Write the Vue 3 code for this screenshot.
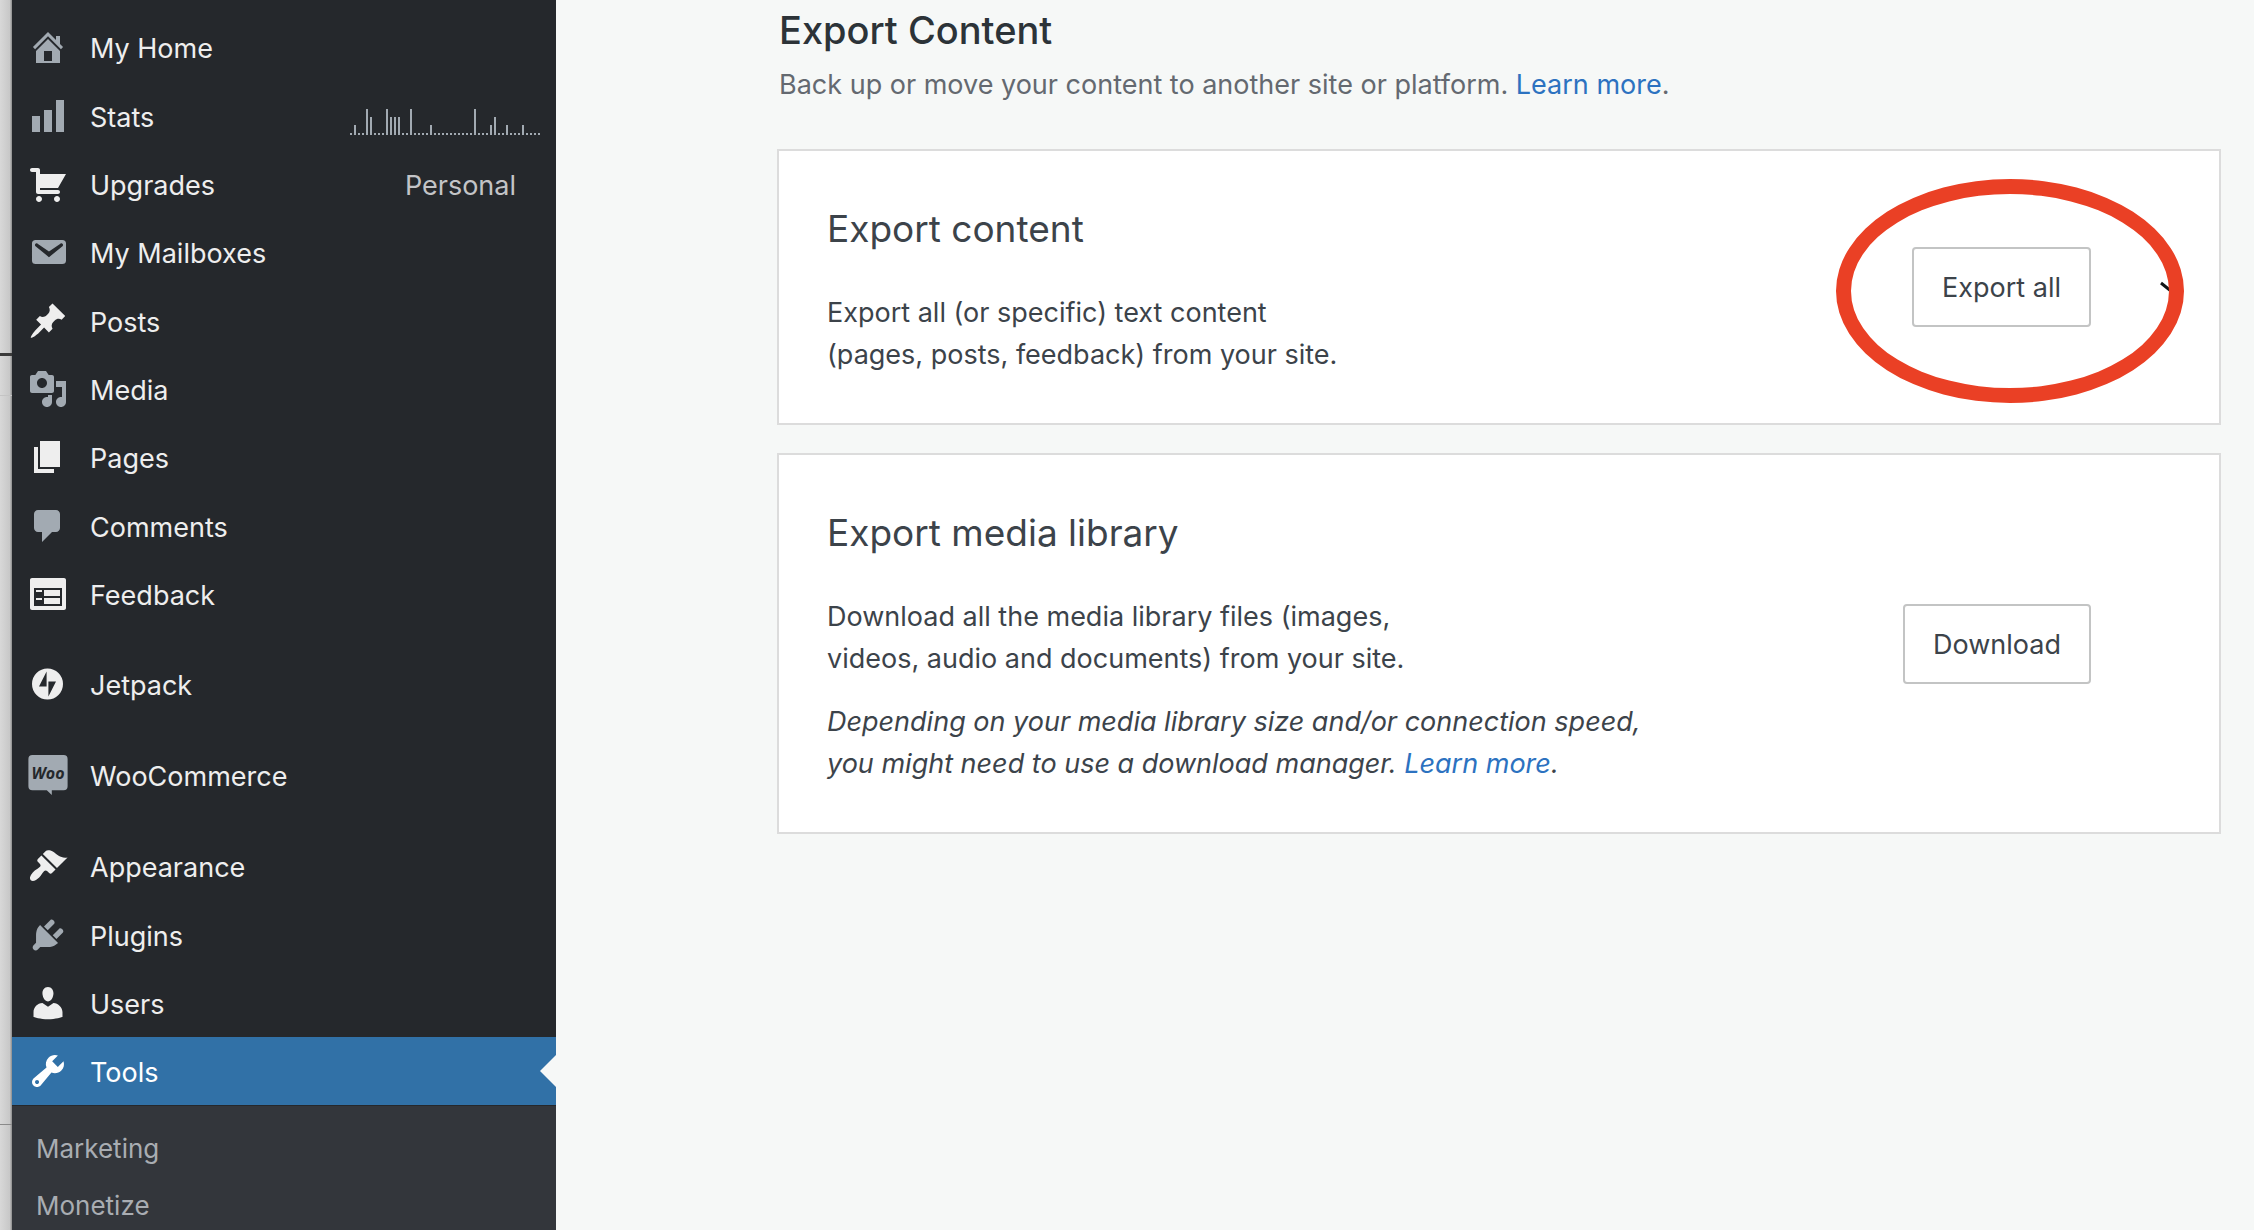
<script setup>
const groups = [
  [
    { label: 'My Home', dim: true, d: 'M16 8.5l1.53 1.53-1.06 1.06L10 4.6l-6.47 6.49-1.06-1.06L10 2.5l4 4v-2h2v4zm-6-2.46l6 5.99V18H4v-5.97zM12 17v-5H8v5h4z' },
    { label: 'Stats', dim: true, spark: true, d: 'M18 18V2h-4v16h4zm-6 0V7H8v11h4zm-6 0v-8H2v8h4z' },
    { label: 'Upgrades', note: 'Personal', d: 'M6 13h9c.55 0 1 .45 1 1s-.45 1-1 1H5c-.55 0-1-.45-1-1V4H2c-.55 0-1-.45-1-1s.45-1 1-1h3c.55 0 1 .45 1 1v2h13l-4 7H6v1zm-.5 3c.83 0 1.5.67 1.5 1.5S6.33 19 5.5 19 4 18.33 4 17.5 4.67 16 5.5 16zm9 0c.83 0 1.5.67 1.5 1.5s-.67 1.5-1.5 1.5-1.5-.67-1.5-1.5.67-1.5 1.5-1.5z' },
    { label: 'My Mailboxes', dim: true, d: 'M3.87 4h13.25C18.37 4 19 4.59 19 5.79v8.42c0 1.19-.63 1.79-1.88 1.79H3.87c-1.25 0-1.88-.6-1.88-1.79V5.79c0-1.2.63-1.79 1.88-1.79zm6.62 8.6l6.74-5.53c.24-.2.43-.66.13-1.07-.29-.41-.82-.42-1.17-.17l-5.7 3.86L4.8 5.83c-.35-.25-.88-.24-1.17.17-.3.41-.11.87.13 1.07z' },
    { label: 'Posts', d: 'M10.44 3.02l1.82-1.82 6.36 6.35-1.83 1.82c-1.05-.68-2.48-.57-3.41.36l-.75.75c-.92.93-1.04 2.35-.35 3.41l-1.83 1.82-2.41-2.41-2.8 2.79c-.42.42-3.38 2.71-3.8 2.29s1.86-3.39 2.28-3.81l2.79-2.79L4.1 9.36l1.83-1.82c1.05.69 2.48.57 3.4-.36l.75-.75c.93-.92 1.05-2.35.36-3.41z' },
    { label: 'Media', dim: true, d: 'M13 11V4c0-.55-.45-1-1-1h-1.67L9 1H5L3.67 3H2c-.55 0-1 .45-1 1v7c0 .55.45 1 1 1h10c.55 0 1-.45 1-1zM7 4.5c1.38 0 2.5 1.12 2.5 2.5S8.38 9.5 7 9.5 4.5 8.38 4.5 7 5.62 4.5 7 4.5zM14 6h5v10.5c0 1.38-1.12 2.5-2.5 2.5S14 17.88 14 16.5s1.12-2.5 2.5-2.5c.17 0 .34.02.5.05V9h-3V6zm-4 8.05V13h2v3.5c0 1.38-1.12 2.5-2.5 2.5S7 17.88 7 16.5 8.12 14 9.5 14c.17 0 .34.02.5.05z' },
    { label: 'Pages', d: 'M6 15V2h10v13H6zm-1 1h8v2H3V5h2v11z' },
    { label: 'Comments', dim: true, d: 'M5 2h9c1.1 0 2 .9 2 2v7c0 1.1-.9 2-2 2h-2l-5 5v-5H5c-1.1 0-2-.9-2-2V4c0-1.1.9-2 2-2z' },
    { label: 'Feedback', d: 'M2 2h16c.55 0 1 .45 1 1v14c0 .55-.45 1-1 1H2c-.55 0-1-.45-1-1V3c0-.55.45-1 1-1zm15 14V7H3v9h14zM4 8v1h3V8H4zm4 0v3h8V8H8zm-4 4v1h3v-1H4zm4 0v3h8v-3H8z' },
  ],
  [{ label: 'Jetpack', d: 'M9.75 2.25a7.75 7.75 0 1 0 0 15.5a7.75 7.75 0 1 0 0-15.5zM9.3 11.2H5.5l3.8-7.4zM10.2 16.2V8.8h3.8z' }],
  [{ label: 'WooCommerce', dim: true, woo: true, d: 'M2.2 0h15.6a2 2 0 0 1 2 2v13.6a2 2 0 0 1-2 2H11.9V20L9.4 17.6H2.2a2 2 0 0 1-2-2V2a2 2 0 0 1 2-2z' }],
  [
    { label: 'Appearance', d: 'M14.48 11.06L7.41 3.99l1.5-1.5c.5-.56 2.3-.47 3.51.32 1.21.8 1.43 1.28 2.91 2.1 1.18.64 2.45 1.26 4.45.85zm-.71.71L6.7 4.7 4.93 6.47c-.39.39-.39 1.02 0 1.41l1.06 1.06c.39.39.39 1.03 0 1.42-.6.6-1.43 1.11-2.21 1.69-.35.26-.7.53-1.01.84C1.43 14.23.4 16.08 1.4 17.07c.99 1 2.84-.03 4.18-1.36.31-.31.58-.66.85-1.02.57-.78 1.08-1.61 1.69-2.21.39-.39 1.02-.39 1.41 0l1.06 1.06c.39.39 1.02.39 1.41 0z' },
    { label: 'Plugins', dim: true, d: 'M13.11 4.36L9.87 7.6 8 5.73l3.24-3.24c.35-.34 1.05-.2 1.56.32.52.51.66 1.21.31 1.55zm-8 1.77l.91-1.12 9.01 9.01-1.19.84c-.71.71-2.63 1.16-3.82 1.16H6.14L4.9 17.26c-.59.59-1.54.59-2.12 0-.59-.58-.59-1.53 0-2.12l1.24-1.24v-3.88c0-1.13.4-3.19 1.09-3.89zm7.26 3.97l3.24-3.24c.34-.35 1.04-.21 1.55.31.52.51.66 1.21.31 1.55l-3.24 3.25z' },
    { label: 'Users', d: 'M10 9.25c-2.27 0-2.73-3.44-2.73-3.44C7 4.02 7.82 2 9.97 2c2.16 0 2.98 2.02 2.71 3.81 0 0-.41 3.44-2.68 3.44zm0 2.57L12.72 10c2.39 0 4.52 2.33 4.52 4.53v2.49s-3.65 1.13-7.24 1.13c-3.65 0-7.24-1.13-7.24-1.13v-2.49c0-2.25 1.94-4.48 4.47-4.48z' },
    { label: 'Tools', active: true, d: 'M16.68 9.77c-1.34 1.34-3.3 1.67-4.95.99l-5.41 6.52c-.99.99-2.59.99-3.58 0s-.99-2.59 0-3.57l6.52-5.42c-.68-1.65-.35-3.61.99-4.95 1.28-1.28 3.12-1.62 4.72-1.06l-2.89 2.89 2.82 2.82 2.86-2.87c.53 1.58.18 3.39-1.08 4.65zM3.81 16.21c.4.39 1.04.39 1.43 0 .4-.4.4-1.04 0-1.43-.39-.4-1.03-.4-1.43 0-.39.39-.39 1.03 0 1.43z' },
  ],
]

const subItems = ['Marketing', 'Monetize']

// Hourly views, 0 to 3, for the last 48 hours
const peaks = { 1: 1, 4: 3, 5: 2, 9: 3, 10: 2, 11: 2, 12: 2, 15: 3, 20: 1, 31: 3, 35: 1, 36: 2, 39: 1, 43: 1 }
const views = Array.from({ length: 48 }, (_, hour) => 2 + 8 * (peaks[hour] || 0))
</script>

<template>
  <div class="app">
    <div class="backdrop" aria-hidden="true"></div>

    <nav class="sidebar" aria-label="Site">
      <ul v-for="(group, g) in groups" :key="g" class="menu">
        <li v-for="item in group" :key="item.label">
          <a href="#" class="item" :class="{ active: item.active }">
            <svg class="icon" :class="{ dim: item.dim }" viewBox="0 0 20 20" aria-hidden="true">
              <path fill-rule="evenodd" :d="item.d" />
              <text v-if="item.woo" class="woo" x="10" y="12">Woo</text>
            </svg>
            <span class="label">{{ item.label }}</span>
            <span v-if="item.spark" class="spark">
              <i v-for="(h, i) in views" :key="i" :style="{ height: h + 'px' }"></i>
            </span>
            <span v-if="item.note" class="note">{{ item.note }}</span>
          </a>
        </li>
      </ul>
      <ul class="submenu">
        <li v-for="name in subItems" :key="name"><a href="#">{{ name }}</a></li>
      </ul>
    </nav>

    <main class="content">
      <header>
        <h1>Export Content</h1>
        <p class="intro">Back up or move your content to another site or platform. <a href="#">Learn more</a>.</p>
      </header>

      <section class="card">
        <div class="copy">
          <h2>Export content</h2>
          <p>Export all (or specific) text content<br>(pages, posts, feedback) from your site.</p>
        </div>
        <button type="button" class="action">Export all</button>
        <button type="button" class="toggle" aria-label="Expand">
          <svg viewBox="0 0 24 12" aria-hidden="true"><path d="M2 2l10 8 10-8" /></svg>
        </button>
        <div class="ring" aria-hidden="true"></div>
      </section>

      <section class="card">
        <div class="copy">
          <h2>Export media library</h2>
          <p>Download all the media library files (images,<br>videos, audio and documents) from your site.</p>
          <p class="hint">Depending on your media library size and/or connection speed,<br>you might need to use a download manager. <a href="#">Learn more</a>.</p>
        </div>
        <button type="button" class="action">Download</button>
        <div class="toggle"></div>
      </section>
    </main>
  </div>
</template>

<style>
body {
  margin: 0;
  background: #f6f8f7;
}
</style>

<style scoped>
.app {
  display: flex;
  height: 100vh;
  overflow: hidden;
  background: #f6f8f7;
  color: #3c434a;
  font: 27px/42px Inter, "Liberation Sans", sans-serif;
}

a {
  color: #2c72c0;
  text-decoration: none;
}

ul,
p,
h1,
h2 {
  margin: 0;
  padding: 0;
  list-style: none;
}

.backdrop {
  flex: none;
  width: 12px;
  background:
    linear-gradient(#3a3a3a, #3a3a3a) 0 353px / 100% 3px no-repeat,
    linear-gradient(#c4c4c4, #c4c4c4) 0 395px / 100% 1px no-repeat,
    linear-gradient(#8a8a8a, #8a8a8a) 0 1124px / 100% 1px no-repeat,
    linear-gradient(90deg, #d8d8d8, #c8c8c8 80%, #8c8c8c);
}

.sidebar {
  display: flex;
  flex: none;
  flex-direction: column;
  gap: 22px;
  box-sizing: border-box;
  width: 544px;
  padding-top: 13px;
  background: #25282c;
}

.menu li:nth-child(3n + 1) {
  margin-bottom: 1px;
}

.item {
  display: flex;
  position: relative;
  align-items: center;
  height: 68px;
  padding: 0 16px;
  color: #eeeeee;
}

.icon {
  width: 40px;
  height: 40px;
  margin-right: 22px;
  fill: #eeeeee;
}

.icon.dim {
  fill: #a2aab2;
}

.icon .woo {
  fill: #25282c;
  font: italic 700 8px "Liberation Sans Narrow", "Open Sans", sans-serif;
  text-anchor: middle;
}

.label,
.note {
  padding-top: 4px;
}

.label {
  flex: 1;
}

.spark {
  display: flex;
  align-items: flex-end;
  gap: 2px;
  height: 38px;
}

.spark i {
  width: 2px;
  background: #a2aab2;
}

.note {
  margin-right: 24px;
  color: #c3c4c7;
}

.item.active {
  background: #3171a7;
  color: #ffffff;
}

.item.active .icon {
  fill: #ffffff;
}

.item.active::after {
  position: absolute;
  top: 18px;
  right: 0;
  border: 16px solid transparent;
  border-left: 0;
  border-right-color: #f6f8f7;
  content: "";
}

.submenu {
  flex: 1;
  margin-top: -22px;
  padding: 14px 24px;
  background: #33363b;
  font-size: 26px;
  line-height: 57px;
}

.submenu a {
  color: #a9adb2;
}

.content {
  display: flex;
  flex: 1;
  flex-direction: column;
  gap: 28px;
  padding: 5px 33px 0 221px;
}

header {
  padding: 0 2px 15px;
}

h1 {
  color: #2c3338;
  font-size: 38px;
  font-weight: 500;
  line-height: 50px;
}

.intro {
  margin-top: 9px;
  color: #646970;
}

.card {
  display: flex;
  position: relative;
  align-items: center;
  padding: 48px;
  border: 2px solid #dcdcdc;
  background: #ffffff;
}

.copy {
  flex: 1;
}

h2 {
  margin-bottom: 32px;
  font-size: 37px;
  font-weight: 400;
  line-height: 60px;
}

.copy p {
  padding-top: 1px;
  margin-bottom: -1px;
}

.copy .hint {
  margin-top: 21px;
  font-style: italic;
}

button {
  padding: 0;
  background: none;
  color: inherit;
  font: inherit;
}

.action {
  height: 80px;
  padding: 2px 28px 0;
  border: 2px solid #c3c4c4;
  border-radius: 4px;
}

.toggle {
  width: 24px;
  height: 24px;
  margin: 0 -12px 0 68px;
  border: 0;
}

.toggle svg {
  display: block;
  width: 24px;
  height: 12px;
  fill: none;
  stroke: #101517;
  stroke-width: 3;
}

.ring {
  box-sizing: border-box;
  position: absolute;
  top: 28px;
  right: 35px;
  width: 348px;
  height: 224px;
  border: 15px solid #ea4025;
  border-radius: 50%;
  pointer-events: none;
}
</style>
